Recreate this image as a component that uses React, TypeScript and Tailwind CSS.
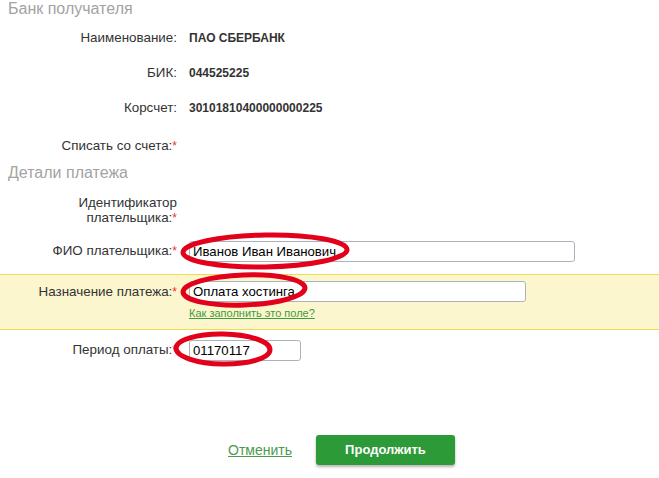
// Payment form with hand-drawn annotation marks

const font = { fontFamily: '"Liberation Sans", Arial, sans-serif' };

function Req() {
  return <span className="text-[12px] text-[#e5332a]">*</span>;
}

interface RowProps {
  label: React.ReactNode;
  children?: React.ReactNode;
  className?: string;
  labelClass?: string;
}

function Row({ label, children, className = '', labelClass = 'leading-[14px]' }: RowProps) {
  return (
    <div className={`flex items-center ${className}`}>
      <div className={`w-[177px] shrink-0 text-right text-[13.4px] text-[#333] ${labelClass}`}>{label}</div>
      <div className="ml-[12px] flex-1 text-[12px] font-bold text-[#333]">{children}</div>
    </div>
  );
}

function TextInput({ value, width }: { value: string; width: string }) {
  return (
    <div
      className={`${width} h-[21px] rounded-[3px] border border-[#aab3ba] bg-white pl-[3px] text-[13.2px] leading-[19px] font-normal text-black`}
    >
      {value}
    </div>
  );
}

function Marks() {
  return (
    <svg className="pointer-events-none absolute inset-0" width="659" height="478">
      <g fill="none" stroke="#e2001a" strokeWidth="5">
        <ellipse cx="265" cy="251" rx="82" ry="16" transform="rotate(-1 265 251)" />
        <ellipse cx="244" cy="290" rx="61" ry="15" transform="rotate(-2 244 290)" />
        <ellipse cx="223" cy="349" rx="47" ry="15" transform="rotate(1 223 349)" />
      </g>
    </svg>
  );
}

export default function App() {
  return (
    <div className="relative h-[478px] w-[659px] overflow-hidden bg-white" style={font}>
      <div className="flex h-[18px] items-center pl-[8px] text-[16px] text-[#a3a3a3]">Банк получателя</div>

      <Row label="Наименование:" className="h-[40px]">ПАО СБЕРБАНК</Row>
      <Row label="БИК:" className="h-[30px]">044525225</Row>
      <Row label="Корсчет:" className="h-[40px]">30101810400000000225</Row>
      <Row
        label={
          <>
            Списать со счета:<Req />
          </>
        }
        className="h-[36px]"
      />

      <div className="flex h-[18px] items-center pl-[8px] text-[16px] text-[#a3a3a3]">Детали платежа</div>

      <Row
        label={
          <>
            Идентификатор
            <br />
            плательщика:<Req />
          </>
        }
        className="h-[56px]"
        labelClass="leading-[15px]"
      />

      <Row
        label={
          <>
            ФИО плательщика:<Req />
          </>
        }
        className="h-[26px]"
      >
        <TextInput value="Иванов Иван Иванович" width="w-[386px]" />
      </Row>

      {/* highlighted field */}
      <div className="mt-[10px] h-[56px] border-y border-[#f0d94c] bg-[#fcf6cf] pt-[6px]">
        <Row
          label={
            <>
              Назначение платежа:<Req />
            </>
          }
        >
          <TextInput value="Оплата хостинга" width="w-[337px]" />
        </Row>
        <div className="ml-[189px] mt-[5px] text-[11px] leading-[13px] text-[#3e9a3e] underline">
          Как заполнить это поле?
        </div>
      </div>

      <Row
        label={
          <>
            Период оплаты:<Req />
          </>
        }
        className="h-[40px]"
      >
        <TextInput value="01170117" width="w-[112px]" />
      </Row>

      <div className="mt-[65px] flex items-center">
        <a className="ml-[228px] text-[14px] text-[#4c9a4c] underline">Отменить</a>
        <button className="ml-[24px] h-[30px] w-[139px] rounded-[3px] bg-[#2b9a37] text-[13px] font-bold text-white shadow-[0_2px_3px_rgba(0,0,0,0.3)]">
          Продолжить
        </button>
      </div>

      <Marks />
    </div>
  );
}
